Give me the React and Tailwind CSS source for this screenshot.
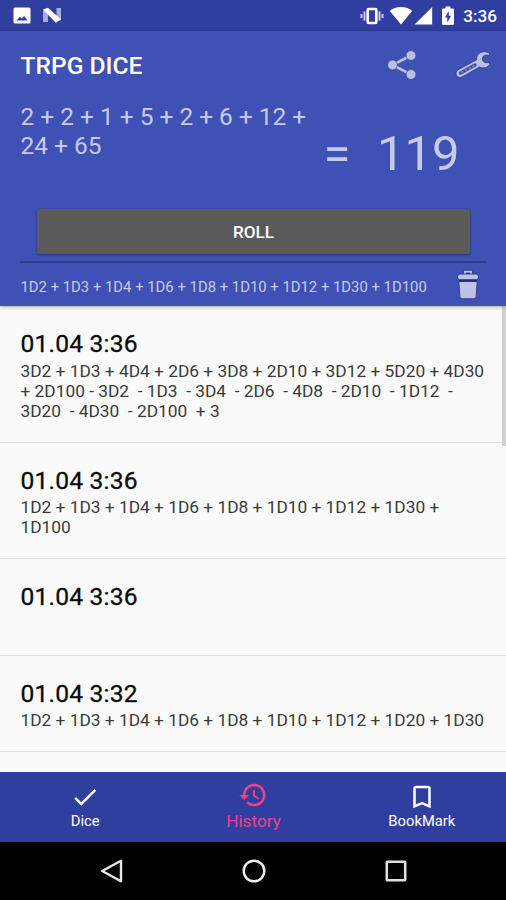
import React from 'react';
import { MdCheck, MdHistory, MdBookmarkBorder } from 'react-icons/md';

const HISTORY = [
  {
    id: 1,
    date: '01.04 3:36',
    lines: [
      '3D2 + 1D3 + 4D4 + 2D6 + 3D8 + 2D10 + 3D12 + 5D20 + 4D30',
      '+ 2D100 - 3D2  - 1D3  - 3D4  - 2D6  - 4D8  - 2D10  - 1D12  -',
      '3D20  - 4D30  - 2D100  + 3',
    ],
  },
  {
    id: 2,
    date: '01.04 3:36',
    lines: ['1D2 + 1D3 + 1D4 + 1D6 + 1D8 + 1D10 + 1D12 + 1D30 +', '1D100'],
  },
  { id: 3, date: '01.04 3:36', lines: [''] },
  {
    id: 4,
    date: '01.04 3:32',
    lines: ['1D2 + 1D3 + 1D4 + 1D6 + 1D8 + 1D10 + 1D12 + 1D20 + 1D30'],
  },
];

function StatusBar() {
  return (
    <div className="flex h-[31px] shrink-0 items-center justify-between bg-[#303f9f] pl-[13px] pr-[9px]">
      <div className="flex items-center gap-[11px]">
        <svg className="h-[17px] w-[18px]" viewBox="0 0 18 17">
          <path
            fill="#fff"
            fillRule="evenodd"
            d="M2 0.5h14a1.5 1.5 0 0 1 1.5 1.5v13a1.5 1.5 0 0 1-1.5 1.5H2A1.5 1.5 0 0 1 .5 15V2A1.5 1.5 0 0 1 2 .5zM3.5 13.5h11l-3.4-4.6-2.3 2.7-1.9-1.8z"
          />
        </svg>
        <svg className="h-[17px] w-[20px]" viewBox="0 0 20 17">
          <path fill="#a5addb" d="M1 2.500l5 3.500v9H1zM14.500 1H19v12.500l-4.500-3.500z" />
          <path fill="#fff" d="M1 2.500L6 .8 19 12.500l-5.200 3.300z" />
        </svg>
      </div>
      <div className="flex items-center">
        <svg className="h-5 w-6" viewBox="0 0 24 20">
          <path fill="none" stroke="#c5caec" strokeWidth="2" d="M1.500 8v4M4.500 5.500v9M19.500 5.500v9M22.500 8v4" />
          <rect x="7.700" y="3" width="8.600" height="14" rx="1" fill="none" stroke="#fff" strokeWidth="2.600" />
        </svg>
        <svg className="ml-[5px] h-5 w-6" viewBox="0 0 24 20">
          <path fill="#fff" d="M12 18.500L.8 5C3.700 2.400 7.500 1 12 1s8.300 1.400 11.200 4z" />
        </svg>
        <svg className="ml-px h-5 w-[19px]" viewBox="0 0 19 20">
          <path fill="#fff" d="M.5 18.500h17.700V1z" />
        </svg>
        <svg className="ml-[8px] h-5 w-[14px]" viewBox="0 0 14 20">
          <path
            fill="#fff"
            fillRule="evenodd"
            d="M4.500 0.500h5v2H12a1 1 0 0 1 1 1V18a1 1 0 0 1-1 1H2a1 1 0 0 1-1-1V3.500a1 1 0 0 1 1-1h2.500zM7.800 5L4 11.500h2.300V16.500l3.800-6.700H7.800z"
          />
        </svg>
        <span className="ml-[8px] text-[17.200px] font-medium leading-5 text-white">3:36</span>
      </div>
    </div>
  );
}

function ShareIcon() {
  return (
    <svg className="h-[30px] w-[30px]" viewBox="0 0 30 30">
      <g fill="#b9c0e6" stroke="#3a4691" strokeWidth="0.700">
        <path fill="none" stroke="#b9c0e6" strokeWidth="2.600" d="M24 5.500L5.500 15 24 24.500" />
        <circle cx="24" cy="5.500" r="4.900" />
        <circle cx="5.500" cy="15" r="4.900" />
        <circle cx="24" cy="24.500" r="4.900" />
      </g>
    </svg>
  );
}

function WrenchIcon() {
  return (
    <svg className="h-[27px] w-[36px]" viewBox="0 0 36 27">
      <path
        fill="#b9c0e6"
        stroke="#35418b"
        strokeWidth="0.900"
        strokeLinejoin="round"
        d="M34.500 2.200C31-.2 25.500.2 23 3.600c-1.200 1.700-1.600 3.400-1.300 5.200L3 18.800C.9 20 .4 22.600 1.600 24.600c1.200 1.900 3.500 2.300 5.500 1.300L24.500 16c3.800 1.800 8.200.8 10.300-2.600l-1-2c-2.600.9-5.600.3-6.300-2.400-.5-2.400.7-4.200 2.600-4.700 1.300-.3 2.900-.1 3.900.4z"
      />
      <path fill="none" stroke="#424f9f" strokeWidth="3.400" strokeLinecap="round" d="M5.500 22L20 14" />
      <path fill="none" stroke="#8f99d0" strokeWidth="1.200" strokeDasharray="2 2.200" d="M6.500 21.500L20 14" />
    </svg>
  );
}

function TrashIcon() {
  return (
    <svg className="h-[31px] w-[24px]" viewBox="0 0 24 31">
      <g fill="#bdc3e8" stroke="#303b86" strokeWidth="1" strokeLinejoin="round">
        <path d="M7.500 5.500V2.200A1 1 0 0 1 8.500 1.200h7a1 1 0 0 1 1 1v3.300h-2.700V4h-3.600v1.500z" />
        <path d="M4 5h16a2.500 2.500 0 0 1 2.500 2.500v1.700l-2 1.500h-17l-2-1.500V7.500A2.500 2.500 0 0 1 4 5z" />
        <path d="M2.800 12.500h18.400l-1 15a2.500 2.500 0 0 1-2.500 2.300H6.300a2.500 2.500 0 0 1-2.500-2.300z" />
      </g>
      <path stroke="#232d6c" strokeWidth="1.500" d="M3 11.800h18" />
    </svg>
  );
}

function Header() {
  return (
    <header className="relative z-10 flex h-[275px] shrink-0 flex-col bg-[#3f51b5] text-[#c5cbe9] shadow-[0_1px_4px_rgba(0,0,0,0.35)]">
      <div className="flex h-[70px] items-center justify-between pl-[20.500px] pr-[15px]">
        <h1 className="text-[24.600px] font-medium leading-7 text-white">TRPG DICE</h1>
        <div className="flex items-center gap-[38px] pb-[3px]">
          <ShareIcon />
          <WrenchIcon />
        </div>
      </div>

      <div className="flex h-[108px] pl-[20.500px]">
        <div className="w-[303px] whitespace-nowrap pt-[1px] text-[24.450px] leading-[29px]">
          <div>2 + 2 + 1 + 5 + 2 + 6 + 12 +</div>
          <div>24 + 65</div>
        </div>
        <div className="flex h-[104px] items-center text-[49px] leading-none">
          <span className="w-[53.500px]">=</span>
          <span>119</span>
        </div>
      </div>

      <button className="mx-[37px] h-[45px] w-[433px] shrink-0 rounded-[2px] bg-[#5a5a5b] pt-[2px] text-[17.200px] font-medium text-white shadow-[0_1px_3px_rgba(0,0,0,0.4)]">
        ROLL
      </button>
      <div className="mx-[20px] mt-[7px] h-[2px] w-[467px] shrink-0 bg-[#303c87]" />
      <div className="flex flex-1 items-center justify-between pl-[20.500px] pr-[26.500px]">
        <span className="whitespace-nowrap pt-[5px] text-[14.860px] leading-5">
          1D2 + 1D3 + 1D4 + 1D6 + 1D8 + 1D10 + 1D12 + 1D30 + 1D100
        </span>
        <TrashIcon />
      </div>
    </header>
  );
}

function HistoryItem({ item }) {
  return (
    <li className="border-b border-[#dcdcdc] pb-[20.600px] pl-[20.500px] pt-[23px]">
      <div className="text-[24.600px] leading-[29px] tracking-[0.2px] text-[#0a0a0a] [-webkit-text-stroke:0.3px_#0a0a0a]">
        {item.date}
      </div>
      <div className="mt-[2.500px] pb-[0.500px] text-[17.320px] leading-[20px] text-[#3a3a3a]">
        {item.lines.map((line, i) => (
          <div key={i} className="h-[20px] whitespace-pre">{line}</div>
        ))}
      </div>
    </li>
  );
}

function BottomTabs() {
  return (
    <nav className="flex h-[70px] shrink-0 bg-[#303f9f] pl-px text-[14.800px] leading-5 text-white">
      <div className="flex flex-1 flex-col items-center pt-[10px]">
        <MdCheck className="h-[30px] w-[30px]" />
        <span className="-mt-px">Dice</span>
      </div>
      <div className="flex flex-1 flex-col items-center pt-[8px] text-[17.200px] text-[#ed4385]">
        <MdHistory className="h-[30px] w-[30px]" />
        <span className="mt-px">History</span>
      </div>
      <div className="flex flex-1 flex-col items-center pt-[10px]">
        <MdBookmarkBorder className="h-[30px] w-[30px]" />
        <span className="-mt-px">BookMark</span>
      </div>
    </nav>
  );
}

function SystemNav() {
  return (
    <div className="flex h-[58px] shrink-0 items-center justify-center gap-[118px] bg-black pl-[2px]">
      <svg className="h-6 w-6" viewBox="0 0 24 24" fill="none" stroke="#e8e8e8" strokeWidth="2.400">
        <path strokeLinejoin="round" d="M21 1.800v20.400L2.200 12z" />
      </svg>
      <svg className="h-6 w-6" viewBox="0 0 24 24" fill="none" stroke="#f0f0f0" strokeWidth="2.400">
        <circle cx="12" cy="12" r="10.300" />
      </svg>
      <svg className="h-6 w-6" viewBox="0 0 24 24" fill="none" stroke="#e0e0e0" strokeWidth="2.600">
        <rect x="2.800" y="2.800" width="18.400" height="18.400" rx="0.500" />
      </svg>
    </div>
  );
}

function App() {
  return (
    <div className="flex h-[900px] w-[506px] flex-col overflow-hidden bg-[#fafafa] font-[Roboto,sans-serif]">
      <StatusBar />
      <Header />
      <main className="relative flex-1 overflow-hidden">
        <ul>
          {HISTORY.map((item) => (
            <HistoryItem key={item.id} item={item} />
          ))}
        </ul>
        {/* Scroll thumb */}
        <div className="absolute right-0 top-0 h-[140px] w-[4px] bg-[#d2d2d2]" />
      </main>
      <BottomTabs />
      <SystemNav />
    </div>
  );
}

export default App;
